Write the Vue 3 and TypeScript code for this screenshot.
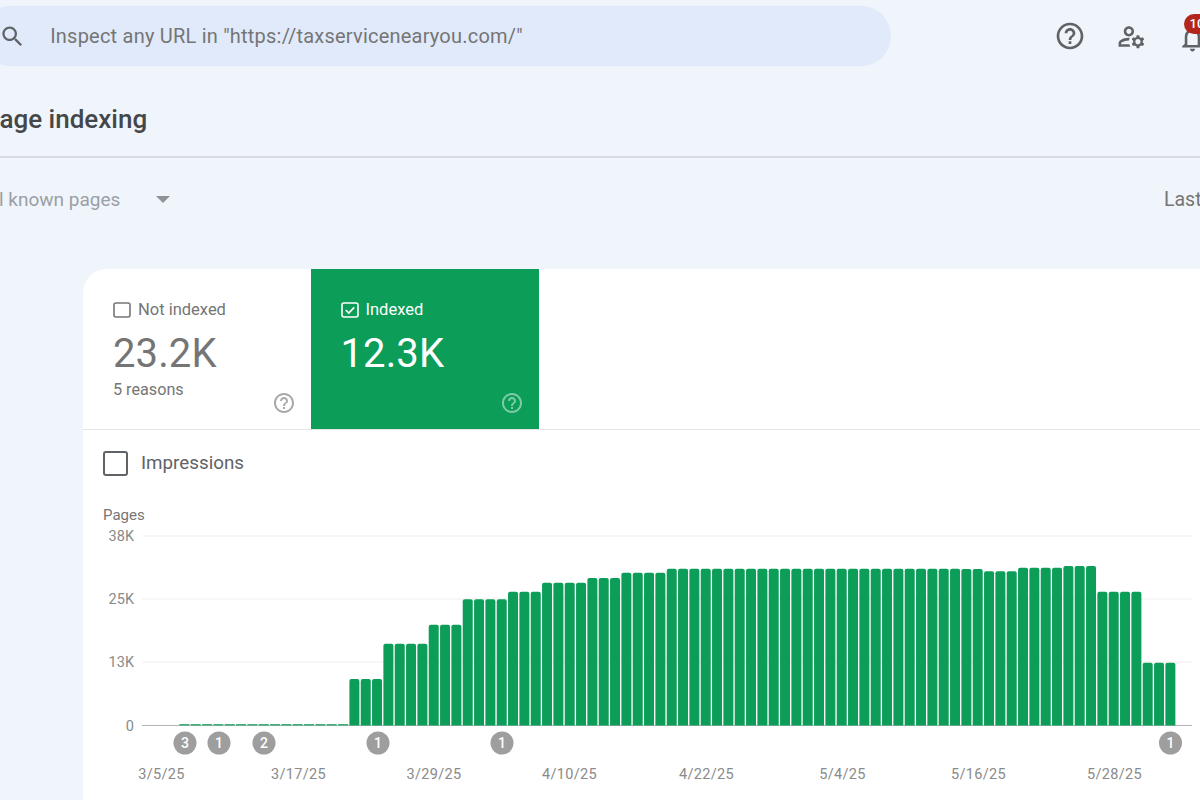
<script setup lang="ts">
const green = '#0c9d58'
const baseY = 725.5
const tops: Array<[number, number]> = [
  [3, 679], [4, 643.7], [3, 624.7], [4, 599.3], [3, 591.7], [4, 582.7], [3, 578], [4, 572.7],
  [26, 568.7], [2, 569], [3, 571.3], [4, 567.7], [3, 566], [4, 591.7], [3, 662.7],
]
interface Bar { x: number; y: number; h: number; small: boolean }
const bars: Bar[] = []
for (let i = 0; i < 15; i++) bars.push({ x: 179.4 + i * 11.333, y: 724, h: 1.6, small: true })
let n = 15
for (const [count, top] of tops) {
  for (let i = 0; i < count; i++) {
    bars.push({ x: 179.4 + n * 11.333, y: top, h: baseY - top, small: false })
    n++
  }
}
const grid = [
  { y: 536, label: '38K' },
  { y: 599, label: '25K' },
  { y: 662, label: '13K' },
]
const events = [
  { x: 185, t: '3' }, { x: 219, t: '1' }, { x: 264, t: '2' },
  { x: 378, t: '1' }, { x: 502, t: '1' }, { x: 1170.5, t: '1' },
]
const dates = [
  { x: 161.5, t: '3/5/25' }, { x: 298.5, t: '3/17/25' }, { x: 434, t: '3/29/25' },
  { x: 569.5, t: '4/10/25' }, { x: 706.5, t: '4/22/25' }, { x: 842.5, t: '5/4/25' },
  { x: 978.5, t: '5/16/25' }, { x: 1114.5, t: '5/28/25' },
]
const helpPath = 'M11 18h2v-2h-2v2zm1-16C6.48 2 2 6.48 2 12s4.48 10 10 10 10-4.48 10-10S17.52 2 12 2zm0 18c-4.41 0-8-3.59-8-8s3.59-8 8-8 8 3.59 8 8-3.59 8-8 8zm0-14c-2.21 0-4 1.79-4 4h2c0-1.1.9-2 2-2s2 .9 2 2c0 2-3 1.75-3 5h2c0-2.25 3-2.5 3-5 0-2.21-1.79-4-4-4z'
</script>

<template>
  <div class="page">
    <header class="top">
      <div class="search">
        <svg class="search-icon" viewBox="0 0 24 24"><path d="M15.5 14h-.79l-.28-.27C15.41 12.59 16 11.11 16 9.5 16 5.91 13.09 3 9.5 3S3 5.91 3 9.5 5.91 16 9.5 16c1.61 0 3.09-.59 4.23-1.57l.27.28v.79l5 4.99L20.49 19l-4.99-5zm-6 0C7.01 14 5 11.99 5 9.5S7.01 5 9.5 5 14 7.01 14 9.5 11.99 14 9.5 14z" /></svg>
        <span class="search-text">Inspect any URL in "https://taxservicenearyou.com/"</span>
      </div>
      <div class="actions">
        <svg class="help" viewBox="0 0 24 24"><path :d="helpPath" /></svg>
        <svg class="manage" viewBox="0 0 24 24">
          <path d="M4 18v-.65c0-.34.16-.66.41-.81C6.1 15.53 8.03 15 10 15c.03 0 .05 0 .08.01.1-.7.3-1.37.59-1.98-.22-.02-.44-.03-.67-.03-2.42 0-4.68.67-6.61 1.82-.88.52-1.39 1.5-1.39 2.53V20h9.26c-.42-.6-.75-1.28-.97-2H4z" />
          <path d="M10 12c2.21 0 4-1.79 4-4s-1.79-4-4-4-4 1.79-4 4 1.79 4 4 4zm0-6c1.1 0 2 .9 2 2s-.9 2-2 2-2-.9-2-2 .9-2 2-2z" />
          <path d="M20.75 16c0-.22-.03-.42-.06-.63l1.14-1.01-1-1.73-1.45.49c-.32-.27-.68-.48-1.08-.63L18 11h-2l-.3 1.49c-.4.15-.76.36-1.08.63l-1.45-.49-1 1.73 1.14 1.01c-.03.21-.06.41-.06.63s.03.42.06.63l-1.14 1.01 1 1.73 1.45-.49c.32.27.68.48 1.08.63L16 21h2l.3-1.49c.4-.15.76-.36 1.08-.63l1.45.49 1-1.73-1.14-1.01c.03-.21.06-.41.06-.63zM17 18c-1.1 0-2-.9-2-2s.9-2 2-2 2 .9 2 2-.9 2-2 2z" />
        </svg>
        <div class="bell-wrap">
          <svg class="bell" viewBox="0 0 24 24"><path d="M12 22c1.1 0 2-.9 2-2h-4c0 1.1.89 2 2 2zm6-6v-5c0-3.07-1.64-5.64-4.5-6.32V4c0-.83-.67-1.5-1.5-1.5s-1.5.67-1.5 1.5v.68C7.63 5.36 6 7.92 6 11v5l-2 2v1h16v-1l-2-2zm-2 1H8v-6c0-2.48 1.51-4.5 4-4.5s4 2.02 4 4.5v6z" /></svg>
          <span class="badge">10</span>
        </div>
      </div>
    </header>

    <div class="title-row"><h1>Page indexing</h1></div>

    <div class="filter-row">
      <div class="filter">
        <span>All known pages</span>
        <i class="caret"></i>
      </div>
      <span class="range">Last 3 months</span>
    </div>

    <section class="card">
      <div class="tabs">
        <div class="tab tab-off">
          <div class="tab-label">
            <svg class="check" viewBox="0 0 18 16"><rect x="1" y="1" width="16" height="14" rx="2" fill="none" stroke="#757575" stroke-width="1.6" /></svg>
            <span>Not indexed</span>
          </div>
          <div class="tab-value">23.2K</div>
          <div class="tab-sub">5 reasons</div>
          <svg class="tab-help" viewBox="0 0 24 24"><path :d="helpPath" /></svg>
        </div>
        <div class="tab tab-on">
          <div class="tab-label">
            <svg class="check" viewBox="0 0 18 16">
              <rect x="1" y="1" width="16" height="14" rx="2" fill="none" stroke="#fff" stroke-width="1.6" />
              <path d="M4.8 8l3 3 5.4-5.6" fill="none" stroke="#fff" stroke-width="1.6" />
            </svg>
            <span>Indexed</span>
          </div>
          <div class="tab-value">12.3K</div>
          <svg class="tab-help" viewBox="0 0 24 24"><path :d="helpPath" /></svg>
        </div>
      </div>

      <div class="impressions">
        <i class="big-check"></i>
        <span>Impressions</span>
      </div>

      <svg class="chart" viewBox="83 500 1200 300">
        <text x="103" y="520" class="t-pages">Pages</text>
        <g v-for="g in grid" :key="g.label">
          <line x1="142" :y1="g.y" x2="1192" :y2="g.y" stroke="#efefef" stroke-width="1" />
          <text x="134" :y="g.y + 5" text-anchor="end" class="t-axis">{{ g.label }}</text>
        </g>
        <text x="134" y="731" text-anchor="end" class="t-axis">0</text>
        <line x1="142" y1="725.5" x2="1192" y2="725.5" stroke="#b4b4b4" stroke-width="1" />
        <path
          v-for="(b, i) in bars"
          :key="i"
          :d="b.small
            ? `M${b.x} ${b.y}h10v${b.h}h-10z`
            : `M${b.x} ${b.y + b.h}v${-(b.h - 2)}q0 -2 2 -2h6q2 0 2 2v${b.h - 2}z`"
          :fill="b.small ? '#3fae78' : green"
        />
        <g v-for="e in events" :key="e.x">
          <circle :cx="e.x" cy="743" r="11.5" fill="#9e9e9e" />
          <text :x="e.x" y="748" text-anchor="middle" class="t-event">{{ e.t }}</text>
        </g>
        <text v-for="d in dates" :key="d.t" :x="d.x" y="779" text-anchor="middle" class="t-date">{{ d.t }}</text>
      </svg>
    </section>
  </div>
</template>

<style>
html, body { margin: 0; background: #f0f4fb; }
</style>

<style scoped>
.page {
  width: 1200px;
  height: 800px;
  overflow: hidden;
  background: #f0f4fb;
  font-family: Roboto, "Liberation Sans", sans-serif;
  color: #5f6368;
}
.top {
  display: flex;
  align-items: center;
  width: 1240px;
  margin-left: -20px;
  padding-top: 6px;
  height: 60px;
}
.search {
  flex: 0 0 auto;
  display: flex;
  align-items: center;
  width: 911px;
  height: 60px;
  border-radius: 30px;
  background: #e0eafb;
}
.search-icon {
  width: 27px;
  height: 27px;
  margin-left: 18.6px;
  fill: #5f6368;
  flex: none;
}
.search-text {
  margin-left: 24.6px;
  font-size: 20px;
  letter-spacing: 0.22px;
  color: #757575;
  white-space: nowrap;
}
.actions {
  display: flex;
  align-items: center;
  margin-left: 163px;
  gap: 30px;
  flex: none;
}
.help { width: 32px; height: 32px; fill: #5f6368; margin-top: -1px; }
.manage { width: 31px; height: 31px; fill: #5f6368; }
.bell-wrap { position: relative; width: 31px; height: 31px; margin-top: 4px; }
.bell { width: 31px; height: 31px; fill: #5f6368; display: block; }
.badge {
  position: absolute;
  left: 7px;
  top: -9px;
  min-width: 20px;
  height: 20px;
  padding: 0 3px;
  border-radius: 10px;
  background: #b3261e;
  color: #fff;
  font-size: 13px;
  font-weight: 500;
  line-height: 20px;
  text-align: center;
}
.title-row {
  height: 85px;
  margin-top: 7px;
  border-bottom: 2px solid #d8dce2;
  box-sizing: border-box;
  display: flex;
  align-items: center;
}
.title-row h1 {
  margin: 9px 0 0 -17px;
  font-size: 26px;
  font-weight: 500;
  color: #44474a;
  white-space: nowrap;
}
.filter-row {
  display: flex;
  align-items: center;
  justify-content: space-between;
  height: 83px;
  margin-left: -18px;
  width: 1300px;
}
.filter {
  display: flex;
  align-items: center;
  font-size: 19px;
  color: #9aa0a6;
}
.caret {
  width: 0;
  height: 0;
  margin-left: 36px;
  border-left: 7.5px solid transparent;
  border-right: 7.5px solid transparent;
  border-top: 7.5px solid #8e9196;
}
.range {
  font-size: 19.5px;
  color: #757575;
  width: 118px;
  white-space: nowrap;
}
.card {
  width: 1200px;
  margin: 28px 0 0 83px;
  height: 600px;
  border-radius: 24px 0 0 0;
  background: #fff;
  overflow: hidden;
}
.tabs {
  display: flex;
  height: 161px;
  box-sizing: border-box;
  border-bottom: 1px solid #e4e4e4;
}
.tab {
  position: relative;
  width: 228px;
  height: 160px;
  box-sizing: border-box;
  padding: 32px 16px 14px 30px;
  display: flex;
  flex-direction: column;
  color: #757575;
}
.tab-off { width: 227.5px; }
.tab-on { background: #0c9d58; color: #fff; }
.tab-label {
  display: flex;
  align-items: center;
  gap: 7px;
  font-size: 16.5px;
  line-height: 18px;
}
.check { width: 18px; height: 16px; flex: none; }
.tab-value {
  margin-top: 10px;
  font-size: 40px;
  line-height: 50px;
  letter-spacing: 0.1px;
}
.tab-on .tab-value { color: #fff; }
.tab-sub { font-size: 16.2px; line-height: 22px; }
.tab-help {
  position: absolute;
  right: 15px;
  bottom: 14px;
  width: 24px;
  height: 24px;
  fill: #a8a8a8;
}
.tab-on .tab-help { fill: #7fcba6; }
.impressions {
  display: flex;
  align-items: center;
  height: 66px;
  padding-left: 20px;
  margin-bottom: 4px;
  box-sizing: border-box;
  font-size: 18.8px;
  color: #5f6368;
}
.big-check {
  width: 25px;
  height: 25px;
  box-sizing: border-box;
  border: 2.5px solid #5f6368;
  border-radius: 3px;
  margin-right: 13px;
}
.chart {
  display: block;
  width: 1200px;
  height: 300px;
}
.t-pages { font-size: 15px; fill: #757575; }
.t-axis { font-size: 14.5px; fill: #8a8a8a; }
.t-event { font-size: 14px; fill: #fff; font-weight: 500; }
.t-date { font-size: 14.5px; fill: #8a8a8a; letter-spacing: 0.3px; }
</style>
